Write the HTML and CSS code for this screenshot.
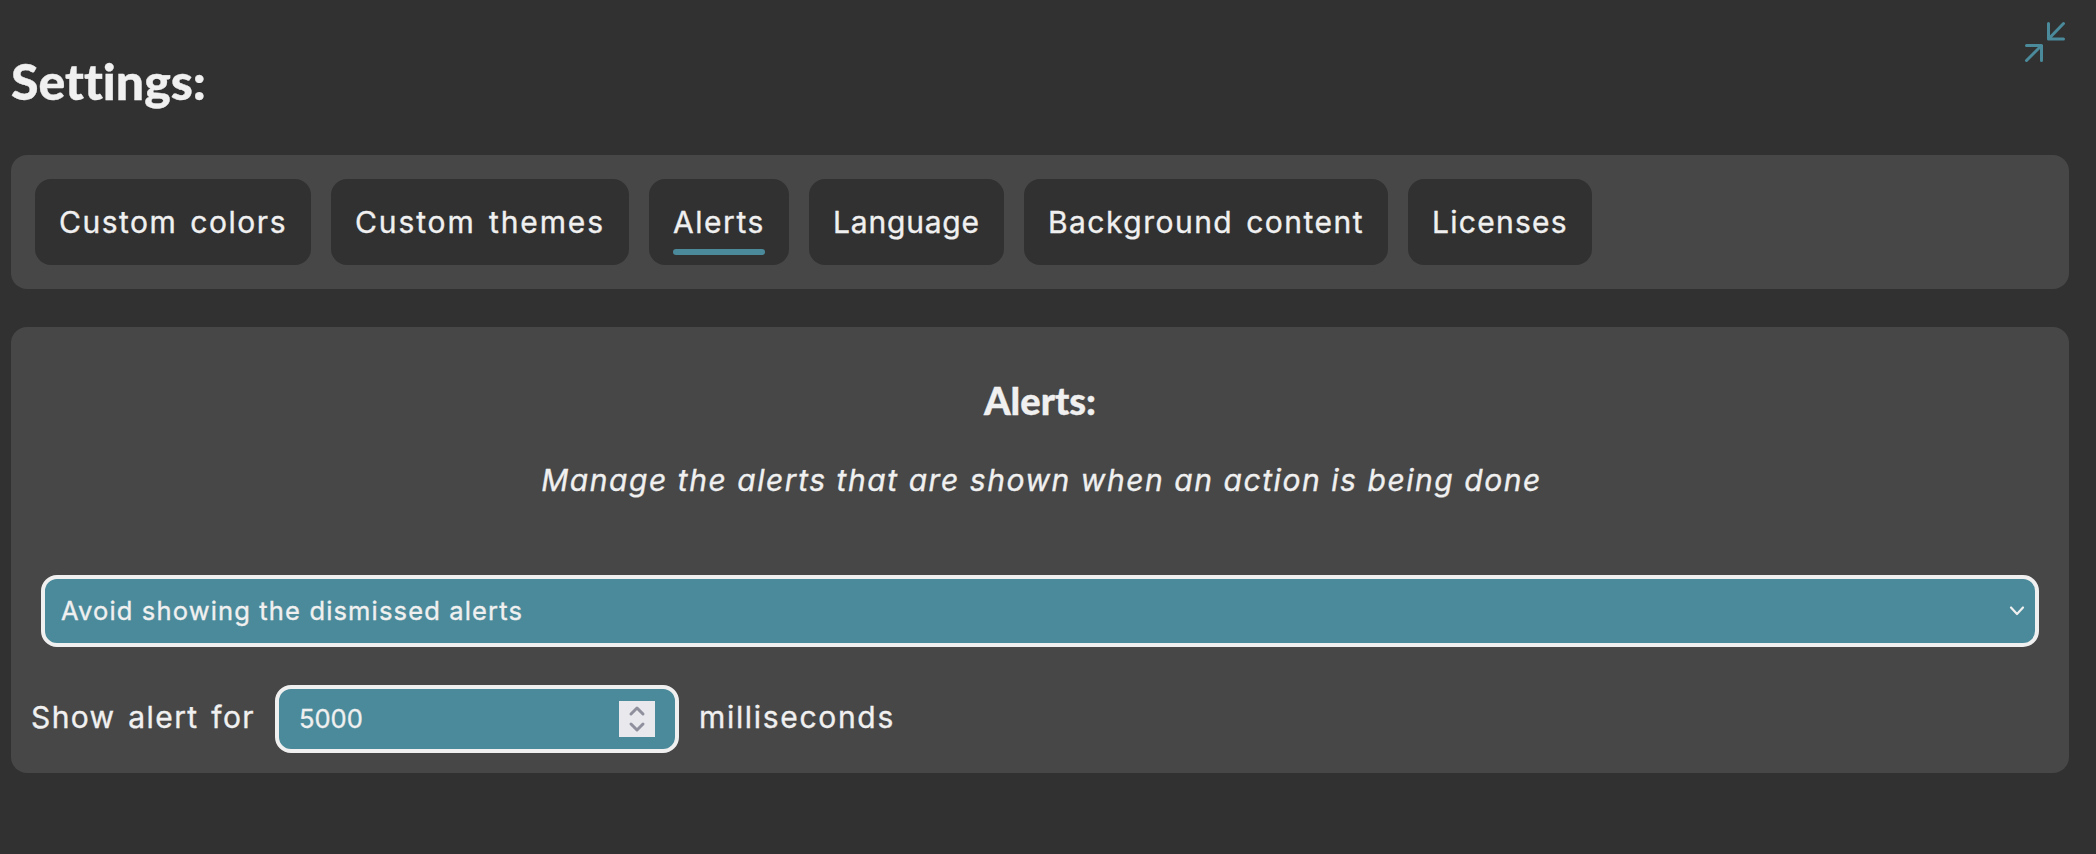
FILE: index.html
```html
<!DOCTYPE html>
<html lang="en">
<head>
<meta charset="utf-8">
<title>Settings</title>
<link rel="stylesheet" href="styles.css">
</head>
<body>
<header class="header">
<h1 class="title">Settings:</h1>
<svg class="collapse" viewBox="0 0 42 42"><path d="M24.5 2.500V18H39.500M24.500 18 39.500 2.500M2.500 24.500H17.500V39.500M17.500 24.500 2.500 39.500"/></svg>
</header>
<nav class="tabs">
<button class="tab colors">Custom colors</button>
<button class="tab themes">Custom themes</button>
<button class="tab alerts active">Alerts</button>
<button class="tab language">Language</button>
<button class="tab background">Background content</button>
<button class="tab licenses">Licenses</button>
</nav>
<main class="panel">
<h2 class="subtitle">Alerts:</h2>
<p class="description">Manage the alerts that are shown when an action is being done</p>
<div class="select"><span>Avoid showing the dismissed alerts</span>
<svg class="chevron" viewBox="0 0 16 12"><path d="M2 2.500 8 9l6-6.500"/></svg></div>
<div class="duration">
<span class="before">Show alert for</span>
<div class="number"><span>5000</span><svg class="spinner" viewBox="0 0 36 36"><path d="M12 13 18 7l6 6M12 23l6 6 6-6"/></svg></div>
<span class="after">milliseconds</span>
</div>
</main>
</body>
</html>
```
FILE: styles.css
```css
* { box-sizing: border-box; }
body {
  margin: 0;
  padding: 0 27px 0 11px;
  height: 854px;
  background: #313131;
  color: #f0f0f0;
  font: 30px/38px Inter, sans-serif;
  -webkit-text-stroke: 0.35px #f0f0f0;
}
.header { display: flex; justify-content: space-between; height: 155px; padding: 21px 3px 0 0; }
.title { margin: 30px 0 0; font: 900 50px/60px Lato, sans-serif; font-variant-ligatures: none; }
.collapse { width: 42px; height: 42px; }
svg { fill: none; stroke: #4a8a9a; stroke-width: 3; stroke-linecap: round; stroke-linejoin: round; }
.tabs { display: flex; gap: 20px; height: 134px; padding: 24px; border-radius: 16px; background: #474747; }
.tab { height: 86px; padding: 24px; border: 0; border-radius: 16px; background: #313131; color: inherit; font: inherit; word-spacing: 3px; white-space: nowrap; }
.colors { letter-spacing: 1.52px; }
.themes { letter-spacing: 1.89px; }
.alerts { letter-spacing: 1.57px; }
.language { letter-spacing: 0.82px; }
.background { letter-spacing: 1.49px; }
.licenses { letter-spacing: 1.27px; }
.active { position: relative; }
.active::after { content: ""; position: absolute; left: 24px; right: 24px; bottom: 10px; height: 6px; border-radius: 3px; background: #4a8a9a; }
.panel { height: 446px; margin-top: 38px; padding: 43px 20px 20px; border-radius: 16px; background: #474747; }
.subtitle { margin: 0; font: 900 38px/60px Lato, sans-serif; text-align: center; }
.description { margin: 31px 0 0; padding-left: 3px; font-style: italic; letter-spacing: 1.55px; text-align: center; }
.select { display: flex; justify-content: space-between; align-items: center; height: 72px; margin: 76px 10px 0; padding: 0 10px 0 16px; border: 4px solid #f0f0f0; border-radius: 16px; background: #4a8a9a; font-size: 25.5px; letter-spacing: 1.15px; }
.chevron { width: 16px; height: 12px; stroke: #f0f0f0; stroke-width: 2.2; }
.duration { display: flex; align-items: center; margin-top: 38px; }
.before { padding-bottom: 4px; letter-spacing: 1.39px; word-spacing: 3px; }
.after { padding-bottom: 4px; letter-spacing: 1.68px; }
.number { display: flex; justify-content: space-between; align-items: center; width: 404px; height: 68px; margin: 0 20px; padding: 0 20px; border: 4px solid #f0f0f0; border-radius: 16px; background: #4a8a9a; font-size: 25.5px; }
.spinner { width: 36px; height: 36px; background: #e9e9ed; stroke: #8f8f9d; }
```
